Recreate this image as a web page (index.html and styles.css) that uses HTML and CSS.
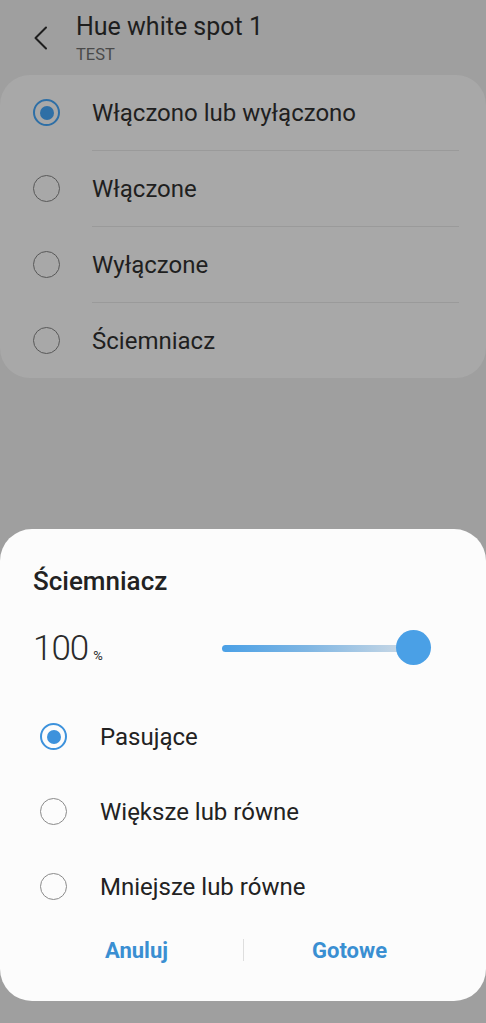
FILE: index.html
```html
<!DOCTYPE html>
<html lang="pl">
<head>
    <meta charset="UTF-8">
    <title>Hue white spot 1</title>
    <link rel="stylesheet" href="styles.css">
</head>
<body>
    <div class="screen">
        <header class="topbar">
            <svg class="back" width="16" height="24" viewBox="0 0 16 24">
                <path d="M13 1.5 L2.5 12 L13 22.5" fill="none" stroke="#1e1e1e" stroke-width="2" stroke-linecap="round" stroke-linejoin="round"/>
            </svg>
            <div class="titles">
                <div class="title">Hue white spot 1</div>
                <div class="subtitle">TEST</div>
            </div>
        </header>

        <div class="card">
            <div class="row"><span class="radio on"></span><span class="label">Włączono lub wyłączono</span></div>
            <div class="row"><span class="radio"></span><span class="label">Włączone</span></div>
            <div class="row"><span class="radio"></span><span class="label">Wyłączone</span></div>
            <div class="row"><span class="radio"></span><span class="label">Ściemniacz</span></div>
        </div>

        <div class="dialog">
            <h2>Ściemniacz</h2>
            <div class="level">
                <div class="value">100<span class="unit">%</span></div>
                <div class="slider">
                    <div class="track"></div>
                    <div class="thumb"></div>
                </div>
            </div>
            <div class="options">
                <div class="option"><span class="radio on"></span><span>Pasujące</span></div>
                <div class="option"><span class="radio"></span><span>Większe lub równe</span></div>
                <div class="option"><span class="radio"></span><span>Mniejsze lub równe</span></div>
            </div>
            <div class="buttons">
                <button class="cancel">Anuluj</button>
                <span class="sep"></span>
                <button class="done">Gotowe</button>
            </div>
        </div>
    </div>
</body>
</html>
```

FILE: styles.css
```css
body {
    margin: 0;
    padding: 0;
    background-color: #9f9f9f;
    font-family: Roboto, "Noto Sans", sans-serif;
    color: #222222;
}

.screen {
    display: flex;
    flex-direction: column;
    height: 1023px;
}

.topbar {
    display: flex;
    align-items: flex-start;
    height: 75px;
    padding-left: 33px;
    box-sizing: border-box;
}

.back {
    margin-top: 26px;
}

.titles {
    margin-left: 27px;
    padding-top: 12px;
}

.title {
    font-size: 25px;
    line-height: 30px;
    color: #1e1e1e;
}

.subtitle {
    font-size: 16.5px;
    line-height: 18px;
    margin-top: 4px;
    color: #4a4a4a;
}

.card {
    background-color: #a8a8a8;
    border-radius: 30px;
}

.row {
    display: flex;
    align-items: center;
    height: 75px;
    padding-left: 33px;
    margin-right: 27px;
}

.row + .row {
    border-top: 1px solid #9a9a9a;
    margin-left: 92px;
    padding-left: 0;
}

.row + .row .radio {
    margin-left: -59px;
}

.row .label {
    margin-left: 32px;
    font-size: 24px;
    color: #1f1f1f;
}

.radio {
    width: 27px;
    height: 27px;
    box-sizing: border-box;
    border: 1.5px solid #585858;
    border-radius: 50%;
    flex-shrink: 0;
    display: inline-flex;
    align-items: center;
    justify-content: center;
}

.radio.on {
    border: 2px solid #2e6fa6;
}

.radio.on::after {
    content: "";
    width: 14px;
    height: 14px;
    border-radius: 50%;
    background-color: #2e6fa6;
}

.dialog {
    margin-top: auto;
    margin-bottom: 22px;
    background-color: #fcfcfc;
    border-radius: 32px;
    height: 472px;
    box-sizing: border-box;
    padding: 36px 0 0 0;
}

.dialog h2 {
    margin: 0 0 0 33px;
    font-size: 26px;
    line-height: 32px;
    font-weight: 500;
    color: #222222;
}

.level {
    display: flex;
    align-items: center;
    margin-top: 29px;
    padding-left: 33px;
    height: 44px;
}

.value {
    font-size: 35px;
    font-weight: 300;
    letter-spacing: -1px;
    color: #2a2a2a;
    width: 189px;
}

.unit {
    font-size: 13px;
    margin-left: 5px;
    font-weight: 400;
    letter-spacing: 0;
}

.slider {
    position: relative;
    width: 210px;
    height: 44px;
    display: flex;
    align-items: center;
}

.track {
    height: 7px;
    width: 190px;
    border-radius: 4px;
    background: linear-gradient(to right, #4aa0e6 0%, #7fb6e3 45%, #cfdbe6 100%);
}

.thumb {
    position: absolute;
    left: 174px;
    top: 4px;
    width: 35px;
    height: 35px;
    border-radius: 50%;
    background-color: #4aa0e6;
}

.options {
    margin-top: 29px;
}

.option {
    display: flex;
    align-items: center;
    height: 75px;
    padding-left: 40px;
    font-size: 24px;
    color: #222222;
}

.option .radio {
    margin-right: 33px;
    border-color: #8a8a8a;
}

.option .radio.on {
    border-color: #3d92dc;
}

.option .radio.on::after {
    background-color: #3d92dc;
}

.buttons {
    display: grid;
    grid-template-columns: 243px 1px 1fr;
    align-items: center;
    height: 50px;
    margin-top: 1px;
}

.buttons button {
    background: none;
    border: none;
    font-family: Roboto, "Noto Sans", sans-serif;
    font-size: 22px;
    font-weight: 700;
    color: #3a8fd2;
    padding: 0;
}

.buttons .cancel {
    text-align: right;
    padding-right: 75px;
}

.buttons .done {
    text-align: left;
    padding-left: 68px;
}

.sep {
    width: 1px;
    height: 22px;
    background-color: #dedede;
}
```
